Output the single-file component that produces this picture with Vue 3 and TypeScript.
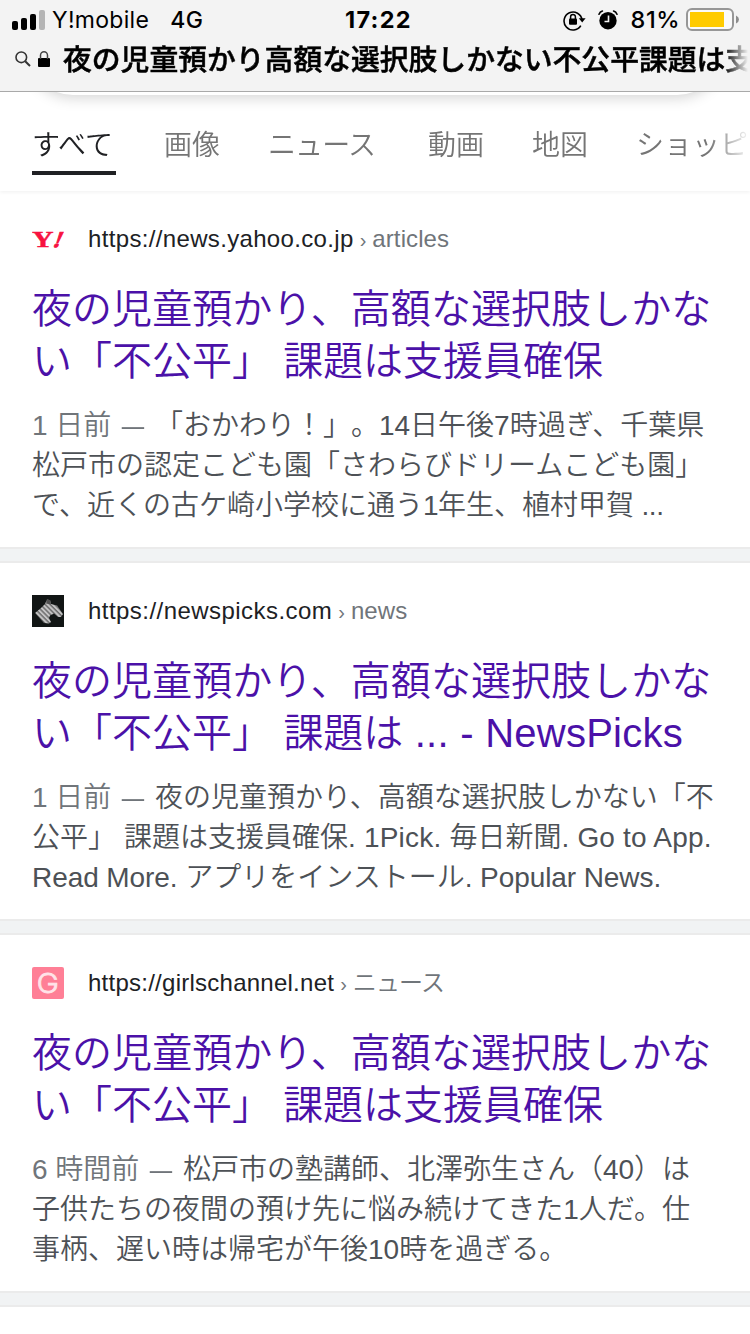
<script setup lang="ts">
interface Line { muted?: string; text: string; latin?: number; spacing?: number }
interface Result {
  icon: 'yahoo' | 'newspicks' | 'girls'
  host: string
  hostSpacing: number
  path: string
  pathSpacing: number
  title: Line[]
  body: Line[]
}

const pageTitle = '夜の児童預かり高額な選択肢しかない不公平課題は支'
const tabs = ['すべて', '画像', 'ニュース', '動画', '地図', 'ショッピング']

const results: Result[] = [
  {
    icon: 'yahoo',
    host: 'https://news.yahoo.co.jp',
    hostSpacing: 0.34,
    path: 'articles',
    pathSpacing: 0.1,
    title: [{ text: '夜の児童預かり、高額な選択肢しかな', spacing: 0.05 }, { text: 'い「不公平」 課題は支援員確保' }],
    body: [
      { muted: '1 日前 ', text: ' 「おかわり！」。14日午後7時過ぎ、千葉県' },
      { text: '松戸市の認定こども園「さわらびドリームこども園」' },
      { text: 'で、近くの古ケ崎小学校に通う1年生、植村甲賀 ...', latin: -0.4 },
    ],
  },
  {
    icon: 'newspicks',
    host: 'https://newspicks.com',
    hostSpacing: 0.45,
    path: 'news',
    pathSpacing: 0.1,
    title: [{ text: '夜の児童預かり、高額な選択肢しかな', spacing: 0.05 }, { text: 'い「不公平」 課題は ... - NewsPicks', latin: 0.25 }],
    body: [
      { muted: '1 日前 ', text: ' 夜の児童預かり、高額な選択肢しかない「不' },
      { text: '公平」 課題は支援員確保. 1Pick. 毎日新聞. Go to App.', latin: 0.2 },
      { text: 'Read More. アプリをインストール. Popular News.', latin: -0.08 },
    ],
  },
  {
    icon: 'girls',
    host: 'https://girlschannel.net',
    hostSpacing: 0.25,
    path: 'ニュース',
    pathSpacing: -0.9,
    title: [{ text: '夜の児童預かり、高額な選択肢しかな', spacing: 0.05 }, { text: 'い「不公平」 課題は支援員確保' }],
    body: [
      { muted: '6 時間前 ', text: ' 松戸市の塾講師、北澤弥生さん（40）は' },
      { text: '子供たちの夜間の預け先に悩み続けてきた1人だ。仕' },
      { text: '事柄、遅い時は帰宅が午後10時を過ぎる。' },
    ],
  },
]

/** Splits a line into runs of Latin and Japanese text. */
function runs(text: string): string[] {
  return text.match(/[\x20-\x7e]+|[^\x20-\x7e]+/g) ?? []
}

function tracking(line: Line, run: string): { letterSpacing: string } {
  const isLatin = run.charCodeAt(0) < 0x7f
  return { letterSpacing: ((isLatin ? line.latin : line.spacing) ?? 0) + 'px' }
}
</script>

<template>
  <div class="screen">
    <header class="chrome">
      <div class="status">
        <div class="side">
          <svg class="signal" width="34" height="20" viewBox="0 0 34 20">
            <rect x="0" y="11" width="6" height="9" rx="2" />
            <rect x="9" y="8" width="6" height="12" rx="2" />
            <rect x="18" y="4" width="6" height="16" rx="2" />
            <rect x="27" y="0" width="6" height="20" rx="2" fill="#b5b5b5" />
          </svg>
          <span class="carrier">Y!mobile</span>
          <span class="network">4G</span>
        </div>
        <div class="clock">17:22</div>
        <div class="side right">
          <svg width="24" height="22" viewBox="0 0 24 22">
            <path d="M17.8 16.6A9 9 0 1 1 19 11" fill="none" stroke="#000" stroke-width="1.6" />
            <path d="M15.8 9.3h6.8l-3.4 4.2z" />
            <rect x="6" y="9.5" width="8" height="6.2" rx="1" />
            <path d="M7.6 10V7.8a2.4 2.4 0 0 1 4.8 0V10" fill="none" stroke="#000" stroke-width="1.5" />
          </svg>
          <svg class="alarm" width="20" height="20" viewBox="0 0 20 20">
            <circle cx="10" cy="10.7" r="8.7" />
            <path d="M1 4.2Q2 1.8 4.4 1M19 4.2Q18 1.8 15.6 1" fill="none" stroke="#000" stroke-width="1.6" stroke-linecap="round" />
            <path d="M10.5 5.5V11.5H6.5" fill="none" stroke="#f3f3f3" stroke-width="1.6" />
          </svg>
          <span class="percent">81%</span>
          <svg width="54" height="24" viewBox="0 0 54 24">
            <rect x="1" y="1" width="46" height="21" rx="5" fill="#fafafa" stroke="#979797" stroke-width="2" />
            <rect x="4" y="4" width="34" height="15" fill="#ffcb00" />
            <path d="M50 7.5q3 1.5 3 4t-3 4z" fill="#8c8c8c" />
          </svg>
        </div>
      </div>
      <div class="address">
        <svg width="18" height="18" viewBox="0 0 18 18" fill="none" stroke="#333">
          <circle cx="7.3" cy="7.3" r="5.3" stroke-width="1.6" />
          <path d="M11.2 11.2L16 16" stroke-width="2" />
        </svg>
        <svg class="lock" width="12" height="18" viewBox="0 0 12 18">
          <rect x="0" y="8" width="12" height="9" rx="1" />
          <path d="M2.5 9V5.2a3.5 3.5 0 0 1 7 0V9" fill="none" stroke="#444" stroke-width="1.5" />
        </svg>
        <div class="query">{{ pageTitle }}</div>
      </div>
    </header>

    <nav class="tabs">
      <div class="pill"></div>
      <div class="tab-row">
        <span v-for="(tab, i) in tabs" :key="tab" class="tab" :class="{ active: i === 0, tight: tab === 'ニュース' }" :style="{ width: tab.length * 28 + 'px' }">{{ tab }}</span>
      </div>
    </nav>

    <main>
      <article v-for="r in results" :key="r.host" class="result">
        <div class="source">
          <svg v-if="r.icon === 'yahoo'" width="32" height="32" viewBox="0 0 32 32">
            <g fill="#f7123f" stroke="#f7123f" font-family="Liberation Serif, serif" font-weight="700">
              <text transform="translate(0 24) scale(1.3 1)" font-size="23" stroke-width=".4">Y</text>
              <text transform="translate(20 24) skewX(-22)" font-size="22.500" stroke-width="1">!</text>
            </g>
          </svg>
          <svg v-else-if="r.icon === 'newspicks'" width="32" height="32" viewBox="0 0 32 32">
            <defs>
              <pattern id="stripes" width="3.4" height="3.4" patternUnits="userSpaceOnUse" patternTransform="rotate(-45)">
                <rect width="3.4" height="3.4" fill="#6e6e6e" />
                <rect width="1.9" height="3.4" fill="#c4c4c4" />
              </pattern>
            </defs>
            <rect width="32" height="32" fill="#111514" />
            <path d="M3 18L9 13L13 9L15 4.500L18 5.500L19 9L25 10.500L31 19L29 22L26 22L22 18.500L18 20.500L17 23L19 27L17 28.500L12 28Z" fill="url(#stripes)" />
            <path d="M14 8.500L15.500 4L18.500 5.500L19 9.500Z" fill="#505050" />
          </svg>
          <svg v-else width="32" height="32" viewBox="0 0 32 32">
            <rect width="32" height="32" rx="2" fill="#ff7f96" />
            <text transform="translate(15.800 26) scale(1.08 1)" text-anchor="middle" font-family="Inter, sans-serif" font-weight="300" font-size="27.500" fill="#ffe3e8" stroke="#ffe3e8" stroke-width=".9">G</text>
          </svg>
          <div class="url"><span :style="{ letterSpacing: r.hostSpacing + 'px' }">{{ r.host }}</span><span class="chevron">›</span><span class="crumb" :style="{ letterSpacing: r.pathSpacing + 'px' }">{{ r.path }}</span></div>
        </div>
        <h3 class="title">
          <span v-for="(l, i) in r.title" :key="i" class="line"><span v-for="(run, j) in runs(l.text)" :key="j" :style="tracking(l, run)">{{ run }}</span></span>
        </h3>
        <p class="body">
          <span v-for="(l, i) in r.body" :key="i" class="line"><span v-if="l.muted" class="muted">{{ l.muted }}<span class="dash">—</span></span><span v-for="(run, j) in runs(l.text)" :key="j" :style="tracking(l, run)">{{ run }}</span></span>
        </p>
        <div class="divider"></div>
      </article>
    </main>
  </div>
</template>

<style>
body { margin: 0; background: #fff; }
</style>

<style scoped>
.screen {
  width: 750px;
  height: 1334px;
  overflow: hidden;
  background: #fff;
  font-family: "Liberation Sans", "Noto Sans CJK JP DemiLight", "Noto Sans CJK JP", sans-serif;
  text-spacing-trim: space-all;
}
svg { display: block; flex: none; }
.chrome {
  box-sizing: border-box;
  height: 92px;
  background: #f3f3f3;
  border-bottom: 1px solid #a9a9a9;
  overflow: hidden;
}
.status {
  display: grid;
  grid-template-columns: 1fr auto 1fr;
  height: 40px;
  align-items: center;
  font-family: Inter, sans-serif;
  font-size: 23px;
  line-height: 40px;
  color: #000;
}
.side { display: flex; align-items: center; padding-left: 12px; }
.right { justify-content: flex-end; padding: 0 10px 0 0; }
.carrier { margin-left: 6px; letter-spacing: 0.3px; }
.network { margin-left: 21px; font-weight: 500; letter-spacing: 0.4px; }
.clock { font-weight: 700; font-size: 23.5px; letter-spacing: 1.3px; padding-left: 7px; }
.alarm { margin-left: 11px; }
.percent { margin: 0 6px 0 13px; font-weight: 500; font-size: 23.5px; letter-spacing: 0.5px; }
.address { display: flex; align-items: center; height: 38px; padding-left: 14px; }
.lock { margin-left: 6px; }
.query {
  margin-left: 13px;
  margin-top: -3px;
  width: 687px;
  overflow: hidden;
  white-space: nowrap;
  font: 500 28.8px/40px "Noto Sans CJK JP", sans-serif;
  -webkit-text-stroke: 0.5px #000;
  color: #000;
  -webkit-mask-image: linear-gradient(90deg, #000 661px, transparent 685px);
  mask-image: linear-gradient(90deg, #000 661px, transparent 685px);
}
.tabs {
  position: relative;
  height: 99px;
  overflow: hidden;
  box-shadow: 0 2px 3px rgba(0, 0, 0, 0.045);
}
.pill {
  position: absolute;
  left: 27px;
  right: 27px;
  top: -89px;
  height: 92px;
  border-radius: 46px;
  background: #fff;
  box-shadow: 0 3px 14px rgba(0, 0, 0, 0.17);
}
.tab-row {
  display: flex;
  gap: 48px;
  padding: 25px 0 0 32px;
  width: 718px;
  overflow: hidden;
  white-space: nowrap;
  -webkit-mask-image: linear-gradient(90deg, #000 708px, transparent 752px);
  mask-image: linear-gradient(90deg, #000 708px, transparent 752px);
}
.tab {
  flex: none;
  height: 54px;
  font: 350 28px/53px "Noto Sans CJK JP DemiLight", "Noto Sans CJK JP", sans-serif;
  color: #757575;
}
.tight { letter-spacing: -0.9px; }
.active { border-bottom: 4px solid #202124; color: #202124; }
.result {
  box-sizing: border-box;
  height: 372px;
  padding: 32px 0 0 32px;
  display: flex;
  flex-direction: column;
}
.divider {
  box-sizing: border-box;
  height: 16px;
  margin: auto 0 0 -32px;
  background: #f1f3f4;
  border: solid #ebebeb;
  border-width: 2px 0;
}
.source { display: flex; align-items: center; height: 32px; }
.url { margin-left: 24px; font-size: 24px; line-height: 32px; color: #202124; white-space: nowrap; font-weight: 350; }
.chevron { margin: 0 6px 0 6px; font-size: 20px; color: #70757a; }
.crumb { color: #70757a; font-kerning: normal; }
.title {
  margin: 28px 0 0;
  font-weight: 350;
  font-size: 40px;
  line-height: 52px;
  color: #4b11a8;
}
.body {
  margin: 19px 0 0;
  font-weight: 350;
  font-size: 28px;
  line-height: 40px;
  color: #4d5156;
}
.line { display: block; white-space: pre; }
.title .line { height: 52px; }
.body .line { height: 40px; }
.muted { color: #70757a; }
.dash { display: inline-block; transform: scaleX(0.8); }
</style>
